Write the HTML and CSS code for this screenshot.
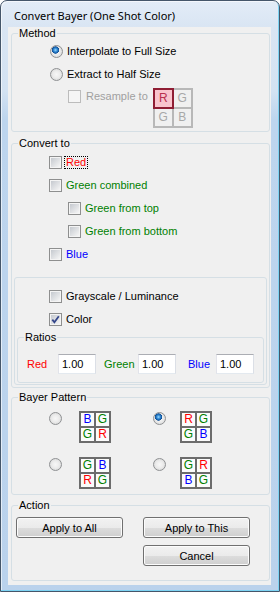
FILE: index.html
```html
<!DOCTYPE html>
<html>
<head>
<meta charset="utf-8">
<link rel="stylesheet" href="styles.css">
</head>
<body>
<div class="window">
  <div class="titlebar">Convert Bayer (One Shot Color)</div>
  <div class="client">
    <fieldset class="group">
      <legend>Method</legend>
      <div class="body method">
        <div class="row"><span class="radio on"></span><span>Interpolate to Full Size</span></div>
        <div class="row"><span class="radio"></span><span>Extract to Half Size</span></div>
        <div class="row resample">
          <span class="check disabled"></span><span class="dis">Resample to</span>
          <div class="rgrid"><span class="sel">R</span><span>G</span><span>G</span><span>B</span></div>
        </div>
      </div>
    </fieldset>

    <fieldset class="group convert">
      <legend>Convert to</legend>
      <div class="body">
        <div class="rows">
          <div class="row"><span class="check"></span><span class="focus red">Red</span></div>
          <div class="row"><span class="check"></span><span class="green">Green combined</span></div>
          <div class="row sub"><span class="check"></span><span class="green">Green from top</span></div>
          <div class="row sub"><span class="check"></span><span class="green">Green from bottom</span></div>
          <div class="row"><span class="check"></span><span class="blue">Blue</span></div>
        </div>
        <div class="inner">
          <div class="inner-rows">
            <div class="row"><span class="check"></span><span>Grayscale / Luminance</span></div>
            <div class="row"><span class="check"><svg width="9" height="9" viewBox="0 0 9 9"><path d="M1.3 4.6 L3.4 7.2 L7.8 1.2" fill="none" stroke="#34468a" stroke-width="1.8"/></svg></span><span>Color</span></div>
          </div>
          <fieldset class="group ratios-box">
            <legend>Ratios</legend>
            <div class="body ratios">
              <span class="red">Red</span><span class="tb">1.00</span>
              <span class="green lbl-g">Green</span><span class="tb">1.00</span>
              <span class="blue lbl-b">Blue</span><span class="tb">1.00</span>
            </div>
          </fieldset>
        </div>
      </div>
    </fieldset>

    <fieldset class="group bayer">
      <legend>Bayer Pattern</legend>
      <div class="body patterns">
        <span class="radio"></span>
        <div class="bgrid"><span class="blue">B</span><span class="green">G</span><span class="green">G</span><span class="red">R</span></div>
        <span class="radio on"></span>
        <div class="bgrid"><span class="red">R</span><span class="green">G</span><span class="green">G</span><span class="blue">B</span></div>
        <span class="radio"></span>
        <div class="bgrid"><span class="green">G</span><span class="blue">B</span><span class="red">R</span><span class="green">G</span></div>
        <span class="radio"></span>
        <div class="bgrid"><span class="green">G</span><span class="red">R</span><span class="blue">B</span><span class="green">G</span></div>
      </div>
    </fieldset>

    <fieldset class="group action">
      <legend>Action</legend>
      <div class="body buttons">
        <div class="btn">Apply to All</div>
        <div class="btn">Apply to This</div>
        <div class="btn cancel">Cancel</div>
      </div>
    </fieldset>
  </div>
</div>
</body>
</html>
```
FILE: styles.css
```css
* { box-sizing: border-box; }
html, body { margin: 0; padding: 0; }
body {
  width: 280px;
  height: 592px;
  overflow: hidden;
  background: #ffffff;
  font-family: "Liberation Sans", Arial, sans-serif;
  font-size: 11px;
  color: #000;
}
.window {
  width: 280px;
  height: 592px;
  border: 1px solid #45566a;
  border-radius: 7px 7px 0 0;
  background: linear-gradient(to bottom, #e3ecf7 0px, #d9e5f3 26px, #d3e2f2 90px, #bdd5ee 118px, #bad2ec 100%);
  padding: 0 8px 6px 7px;
  display: flex;
  flex-direction: column;
  box-shadow: inset -1px -1px 0 #7dd3f3, inset 1px 1px 0 rgba(255,255,255,.6);
}
.titlebar {
  flex: none;
  height: 26px;
  padding: 7px 0 0 6px;
  font-family: "Noto Sans", sans-serif;
  font-size: 11px;
  line-height: 16px;
  white-space: nowrap;
  color: #000;
}
.client {
  flex: 1;
  min-height: 0;
  overflow: hidden;
  background: #f0f0f0;
  display: block;
}
fieldset.group {
  display: block;
  margin: 0 1px 0 3px;
  padding: 0;
  min-width: 0;
  border: 1px solid #d5dfe5;
  border-radius: 3px;
}
legend {
  margin-left: 6px;
  padding: 0 1px;
  font-size: 11px;
  line-height: 13px;
  height: 13px;
}
.row {
  display: flex;
  align-items: center;
  height: 23px;
  line-height: 13px;
  white-space: nowrap;
}
.radio, .check { flex: none; margin-right: 4px; }

.radio {
  width: 13px;
  height: 13px;
  border-radius: 50%;
  border: 1px solid #8f9193;
  background: radial-gradient(circle, #f7f7f7 0, #ececec 45%, #cfcfcf 100%);
}
.radio.on {
  background:
    radial-gradient(circle at 4.5px 4px, #9fdcfb 0, #3b93dc 1.6px, #0d4f97 3.4px, rgba(13,79,151,0) 3.9px),
    radial-gradient(circle, #f7f7f7 0, #ececec 45%, #cfcfcf 100%);
}
.check {
  width: 13px;
  height: 13px;
  border: 1px solid #8e8f8f;
  padding: 1px;
  background: linear-gradient(135deg, #c5c9cf, #f6f6f6) content-box, #f4f4f4;
  display: flex;
}
.check.disabled {
  border-color: #bcbcbc;
  background: #f5f5f5;
}
.check svg { display: block; }

.red { color: #ff0000; }
.green { color: #008000; }
.blue { color: #0000ff; }
.dis { color: #a0a0a0; }

/* Method */
.method { padding: 0 0 3px 38px; }
.row.resample {
  height: auto;
  align-items: flex-start;
  margin-left: 18px;
}
.resample .check { margin-top: 4px; margin-right: 5px; }
.resample .dis { margin-top: 4px; }
.rgrid {
  margin: 2px 0 0 5px;
  display: grid;
  grid-template-columns: 17px 17px;
  grid-template-rows: 17px 17px;
  gap: 2px;
  padding: 2px;
  background: #b8b8b8;
}
.rgrid span {
  background: #f0f0f0;
  color: #a8a8a8;
  font-size: 12px;
  line-height: 17px;
  text-align: center;
}
.rgrid .sel {
  background: #f9c4cd;
  box-shadow: 0 0 0 2px #8f1d33;
  color: #b8304e;
}

/* Convert to */
fieldset.convert { margin-top: 5px; }
.convert > .body { padding: 1px 2px 2px; }
.rows { padding-left: 35px; }
.row.sub { margin-left: 19px; }
.focus {
  border: 1px dotted #000;
  margin-left: -2px;
  padding: 0 1px;
  line-height: 11px;
}
.inner {
  margin-top: 11px;
  border: 1px solid #d5dfe5;
  border-radius: 3px;
  padding: 7px 0 1px;
}
.inner-rows { padding-left: 34px; }
fieldset.ratios-box { margin: 0 2px; }
.ratios {
  padding: 10px 0 8px 9px;
  display: grid;
  grid-template-columns: 31px 38px 42px 38px 40px 38px;
  align-items: center;
  white-space: nowrap;
}
.lbl-g { padding-left: 8px; }
.lbl-b { padding-left: 12px; }
.tb {
  height: 20px;
  border: 1px solid;
  border-color: #abadb3 #dbdfe6 #e3e9ef #e2e3ea;
  background: #fff;
  padding-left: 3px;
  line-height: 18px;
}

/* Bayer */
fieldset.bayer { margin-top: 3px; }
.patterns {
  padding: 7px 0 5px 37px;
  display: grid;
  grid-template-columns: 30px 74px 27px 32px;
  row-gap: 14px;
}
.patterns .radio { align-self: start; margin-top: 1px; }
.bgrid {
  display: grid;
  grid-template-columns: 13px 13px;
  grid-template-rows: 13px 13px;
  gap: 2px;
  padding: 2px;
  width: 32px;
  background: #6c6c6c;
}
.bgrid span {
  background: #fbfbfb;
  font-size: 12px;
  line-height: 13px;
  text-align: center;
}

/* Action */
fieldset.action { margin-top: 4px; }
.buttons {
  padding: 5px 0 14px 4px;
  display: grid;
  grid-template-columns: 107px 107px;
  column-gap: 20px;
  row-gap: 7px;
}
.btn {
  height: 21px;
  border: 1px solid #707070;
  border-radius: 3px;
  background: linear-gradient(#f2f2f2 0%, #ebebeb 50%, #dddddd 51%, #cfcfcf 100%);
  box-shadow: inset 0 0 0 1px #fcfcfc;
  display: flex;
  align-items: center;
  justify-content: center;
  white-space: nowrap;
}
.btn.cancel { grid-column: 2; }
```
